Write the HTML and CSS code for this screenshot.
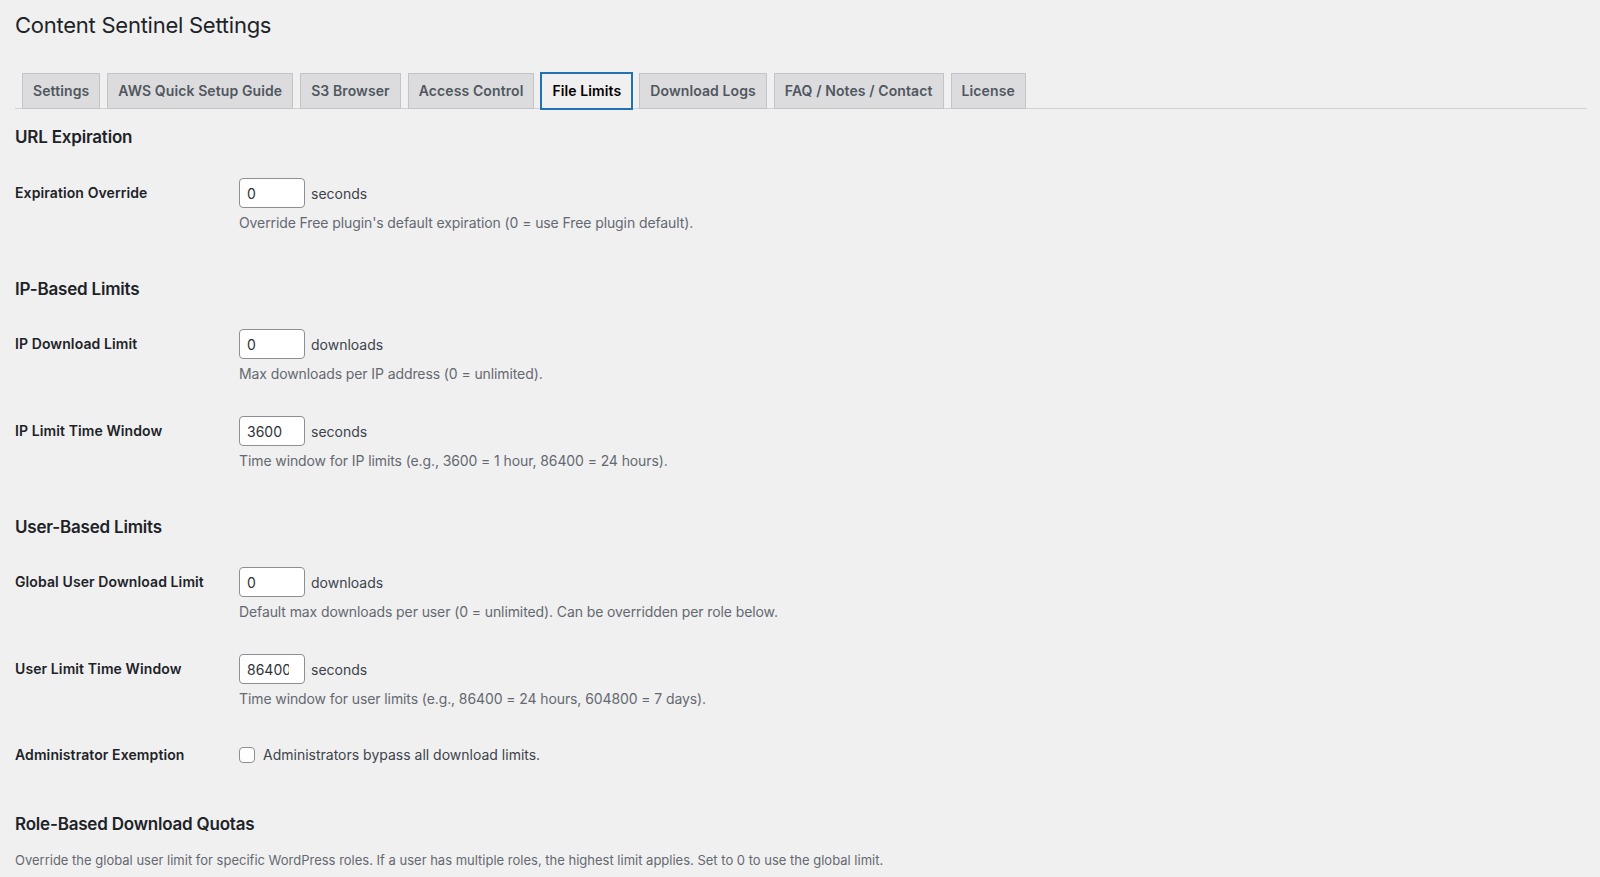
FILE: index.html
```html
<!doctype html>
<html>

<head>
    <title>Content Sentinel Settings</title>
    <meta charset="utf-8">
    <link rel="stylesheet" href="styles.css">
</head>

<body>
    <div class="wrap">
        <h1>Content Sentinel Settings</h1>

        <nav class="tabs">
            <a href="#" class="tab">Settings</a>
            <a href="#" class="tab">AWS Quick Setup Guide</a>
            <a href="#" class="tab">S3 Browser</a>
            <a href="#" class="tab">Access Control</a>
            <a href="#" class="tab active">File Limits</a>
            <a href="#" class="tab">Download Logs</a>
            <a href="#" class="tab">FAQ / Notes / Contact</a>
            <a href="#" class="tab">License</a>
        </nav>

        <h2 class="first">URL Expiration</h2>
        <div class="row">
            <label class="label" for="exp">Expiration Override</label>
            <div class="field">
                <div class="control">
                    <input type="text" id="exp" class="small" value="0">
                    <span class="unit">seconds</span>
                </div>
                <p class="desc">Override Free plugin's default expiration (0 = use Free plugin default).</p>
            </div>
        </div>

        <h2>IP-Based Limits</h2>
        <div class="row">
            <label class="label" for="ip-limit">IP Download Limit</label>
            <div class="field">
                <div class="control">
                    <input type="text" id="ip-limit" class="small" value="0">
                    <span class="unit">downloads</span>
                </div>
                <p class="desc">Max downloads per IP address (0 = unlimited).</p>
            </div>
        </div>
        <div class="row">
            <label class="label" for="ip-window">IP Limit Time Window</label>
            <div class="field">
                <div class="control">
                    <input type="text" id="ip-window" class="small" value="3600">
                    <span class="unit">seconds</span>
                </div>
                <p class="desc">Time window for IP limits (e.g., 3600 = 1 hour, 86400 = 24 hours).</p>
            </div>
        </div>

        <h2>User-Based Limits</h2>
        <div class="row">
            <label class="label" for="user-limit">Global User Download Limit</label>
            <div class="field">
                <div class="control">
                    <input type="text" id="user-limit" class="small" value="0">
                    <span class="unit">downloads</span>
                </div>
                <p class="desc">Default max downloads per user (0 = unlimited). Can be overridden per role below.</p>
            </div>
        </div>
        <div class="row">
            <label class="label" for="user-window">User Limit Time Window</label>
            <div class="field">
                <div class="control">
                    <input type="text" id="user-window" class="small" value="86400">
                    <span class="unit">seconds</span>
                </div>
                <p class="desc">Time window for user limits (e.g., 86400 = 24 hours, 604800 = 7 days).</p>
            </div>
        </div>
        <div class="row">
            <span class="label check-label">Administrator Exemption</span>
            <div class="field">
                <label class="control check">
                    <input type="checkbox">
                    <span class="unit">Administrators bypass all download limits.</span>
                </label>
            </div>
        </div>

        <h2>Role-Based Download Quotas</h2>
        <p class="note">Override the global user limit for specific WordPress roles. If a user has multiple roles, the highest limit applies. Set to 0 to use the global limit.</p>
    </div>
</body>

</html>
```
FILE: styles.css
```css
body {
    margin: 0;
    background: #f0f0f1;
    color: #3c434a;
    font-family: Inter, "Liberation Sans", sans-serif;
    font-size: 13px;
}

.wrap {
    padding: 0 13px 0 15px;
}

h1 {
    margin: 0;
    padding: 10px 0 3px;
    font-size: 22px;
    font-weight: 400;
    letter-spacing: -0.25px;
    line-height: 30px;
    color: #1d2327;
}

.tabs {
    display: flex;
    margin-top: 30px;
    border-bottom: 1px solid #d0d1d3;
}

.tab {
    margin: 0 0 -1px 7px;
    padding: 5px 10px;
    border: 1px solid #c3c4c7;
    background: #dcdcde;
    color: #50575e;
    font-size: 14px;
    font-weight: 600;
    letter-spacing: 0.1px;
    line-height: 24px;
    text-decoration: none;
    white-space: nowrap;
}

.tab.active {
    background: #f0f0f1;
    border-color: #2271b1;
    box-shadow: 0 0 0 1px #2271b1;
    color: #000;
}

h2 {
    margin: 29px 0 13px;
    font-size: 17px;
    font-weight: 600;
    letter-spacing: -0.2px;
    line-height: 22px;
    color: #1d2327;
}

h2.first {
    margin: 17px 0 14px;
}

.row {
    display: grid;
    grid-template-columns: 224px 1fr;
    padding: 16px 0;
}

.label {
    font-size: 14px;
    font-weight: 600;
    letter-spacing: 0.1px;
    line-height: 30px;
    color: #1d2327;
}

.control {
    display: flex;
    align-items: center;
    height: 30px;
}

.small {
    box-sizing: border-box;
    width: 66px;
    height: 30px;
    margin: 0;
    padding: 0 15px 0 7px;
    border: 1px solid #8c8f94;
    border-radius: 4px;
    background: #fff;
    color: #2c3338;
    font-family: inherit;
    font-size: 14px;
}

.unit {
    margin-left: 6px;
    font-size: 14px;
    color: #3c434a;
}

.desc {
    margin: 5px 0 0;
    font-size: 14px;
    letter-spacing: -0.1px;
    line-height: 20px;
    color: #646970;
}

.note {
    margin: 15px 0 0;
    font-size: 13px;
    line-height: 20px;
    color: #646970;
}

.check-label {
    line-height: 27px;
}

.control.check {
    height: 27px;
}

.check input {
    appearance: none;
    box-sizing: border-box;
    width: 16px;
    height: 16px;
    margin: 0 2px 0 0;
    border: 1px solid #8c8f94;
    border-radius: 4px;
    background: #fff;
}
```
